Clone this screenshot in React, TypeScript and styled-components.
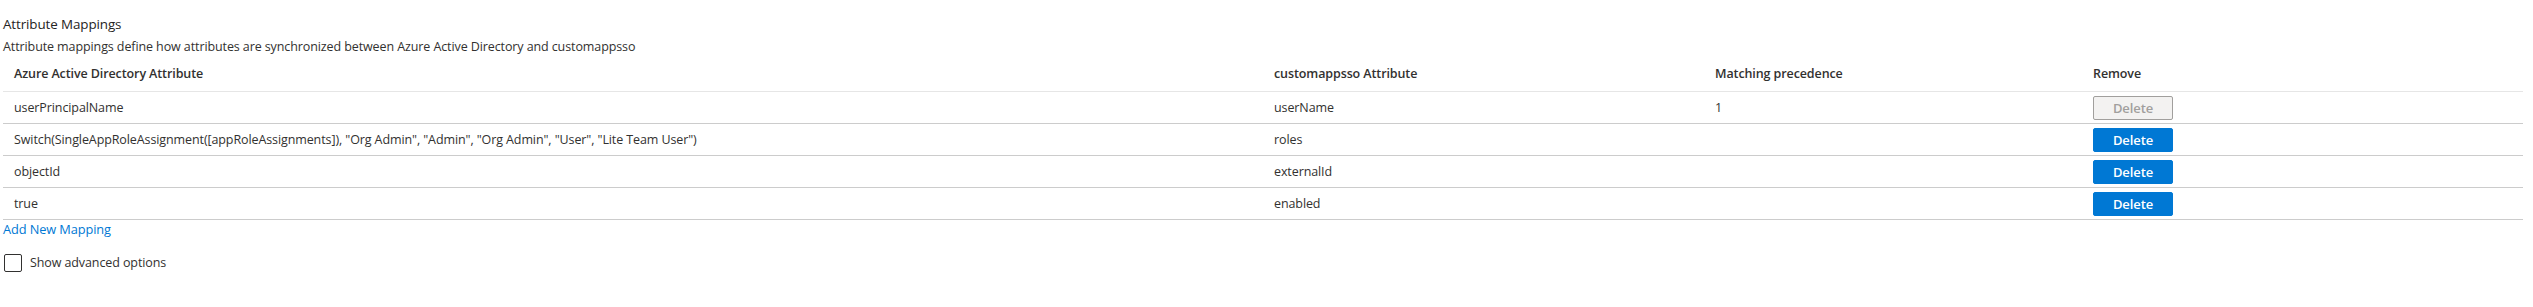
import React from "react";
import styled, { createGlobalStyle } from "styled-components";

const Global = createGlobalStyle`
  html, body { margin: 0; padding: 0; background: #ffffff; }
  body {
    font-family: "Open Sans", "Noto Sans", sans-serif;
    font-size: 12.5px;
    letter-spacing: -0.1px;
    color: #323130;
  }
  * { box-sizing: border-box; }
`;

const Page = styled.div`
  padding: 15px 10px 0 3px;
`;

const Title = styled.div`
  font-size: 13.4px;
  line-height: 18px;
  color: #252423;
`;

const Description = styled.div`
  margin-top: 5px;
  line-height: 18px;
  color: #323130;
`;

const Grid = styled.div`
  display: flex;
  flex-direction: column;
`;

const Row = styled.div<{ $head?: boolean }>`
  display: grid;
  grid-template-columns: 50% 17.5% 15% 17.5%;
  align-items: center;
  height: ${(p) => (p.$head ? "36px" : "32px")};
  border-bottom: 1px solid ${(p) => (p.$head ? "#e6e6e6" : "#cccccc")};
`;

const Cell = styled.div<{ $head?: boolean }>`
  padding-left: 11px;
  font-weight: ${(p) => (p.$head ? 600 : 400)};
  line-height: 18px;
  white-space: nowrap;
  color: #323130;
`;

const DeleteButton = styled.button<{ $disabled?: boolean }>`
  width: 80px;
  height: 24px;
  margin-left: 11px;
  border-radius: 2px;
  font-family: inherit;
  font-size: 13px;
  font-weight: 600;
  letter-spacing: -0.1px;
  line-height: 18px;
  padding: 0;
  cursor: ${(p) => (p.$disabled ? "default" : "pointer")};
  background: ${(p) => (p.$disabled ? "#f3f2f1" : "#0078d4")};
  color: ${(p) => (p.$disabled ? "#a19f9d" : "#ffffff")};
  border: 1px solid ${(p) => (p.$disabled ? "#a19f9d" : "#0078d4")};
`;

const AddLink = styled.a`
  display: block;
  color: #0078d4;
  font-size: 12.8px;
  line-height: 18px;
  text-decoration: none;
  cursor: pointer;
`;

const CheckRow = styled.label`
  display: flex;
  align-items: center;
  gap: 8px;
  margin-top: 16px;
  margin-left: 1px;
`;

const Box = styled.span`
  width: 18px;
  height: 18px;
  border: 1px solid #323130;
  border-radius: 2px;
  background: #ffffff;
`;

const CheckText = styled.span`
  line-height: 18px;
  color: #323130;
`;

type Mapping = { source: string; target: string; precedence: string; locked?: boolean };

const mappings: Mapping[] = [
  { source: "userPrincipalName", target: "userName", precedence: "1", locked: true },
  {
    source:
      'Switch(SingleAppRoleAssignment([appRoleAssignments]), "Org Admin", "Admin", "Org Admin", "User", "Lite Team User")',
    target: "roles",
    precedence: "",
  },
  { source: "objectId", target: "externalId", precedence: "" },
  { source: "true", target: "enabled", precedence: "" },
];

export default function App() {
  return (
    <>
      <Global />
      <Page>
        <Title>Attribute Mappings</Title>
        <Description>
          Attribute mappings define how attributes are synchronized between Azure Active Directory and customappsso
        </Description>
        <Grid>
          <Row $head>
            <Cell $head>Azure Active Directory Attribute</Cell>
            <Cell $head>customappsso Attribute</Cell>
            <Cell $head>Matching precedence</Cell>
            <Cell $head>Remove</Cell>
          </Row>
          {mappings.map((m) => (
            <Row key={m.target}>
              <Cell>{m.source}</Cell>
              <Cell>{m.target}</Cell>
              <Cell>{m.precedence}</Cell>
              <div>
                <DeleteButton $disabled={m.locked} disabled={m.locked}>
                  Delete
                </DeleteButton>
              </div>
            </Row>
          ))}
        </Grid>
        <AddLink>Add New Mapping</AddLink>
        <CheckRow>
          <Box />
          <CheckText>Show advanced options</CheckText>
        </CheckRow>
      </Page>
    </>
  );
}
